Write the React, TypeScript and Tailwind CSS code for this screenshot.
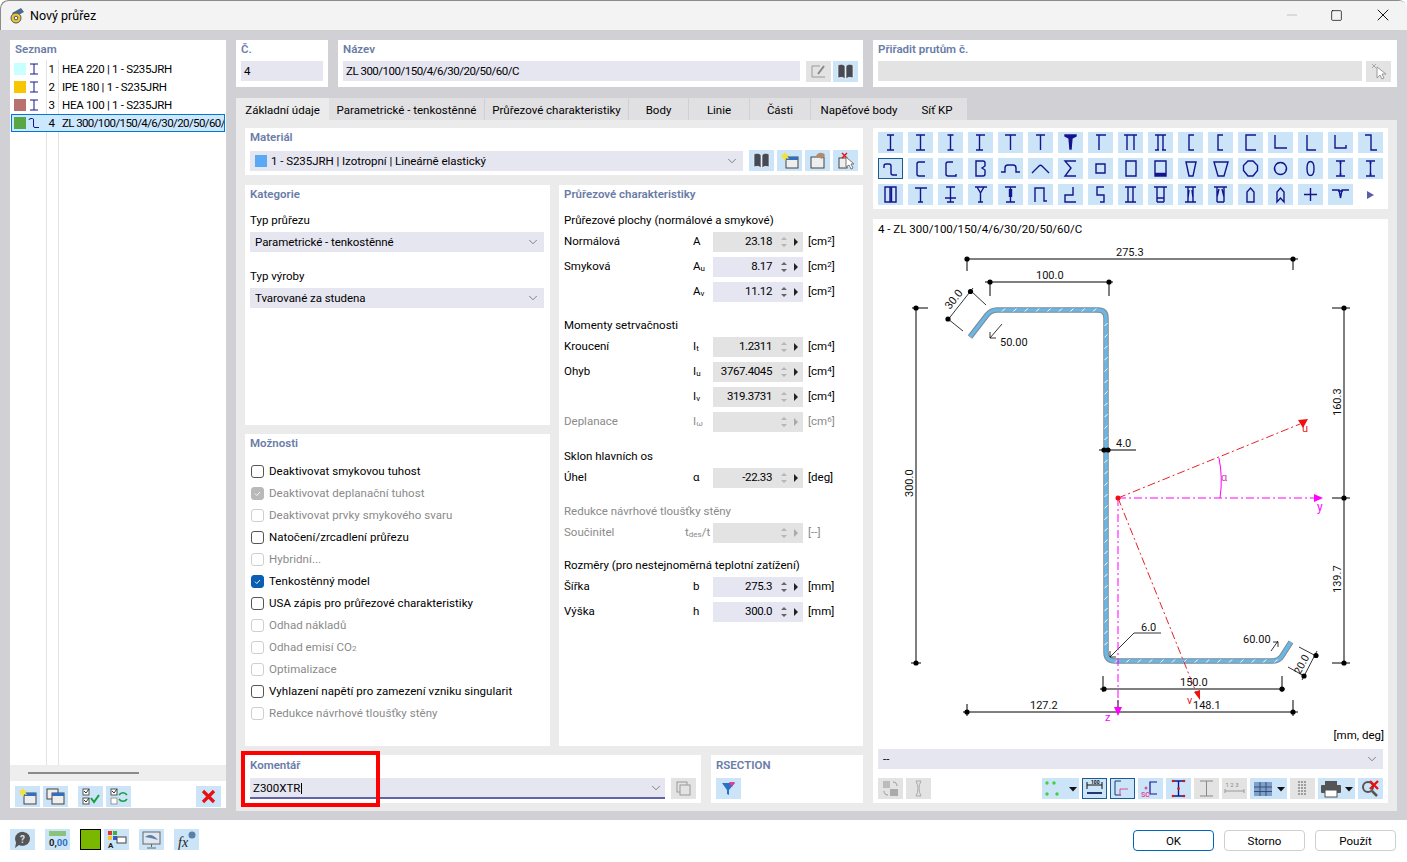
import type { ReactNode } from "react";
import { ChevronDown, Minus, Square, X } from "lucide-react";

const NAVY = "#14148c";

// section shape icons, 25x21 viewBox, row by row
const shapes: string[] = [
  "M9 3h7M12.5 3v15M9 18h7",
  "M8 3h9M12.5 3v15M8 18h9",
  "M9.5 3h6M12.5 3v15M9.5 18h6",
  "M8 3h9M11.5 3v15M8 18h7",
  "M7 3h11M12.5 3v15",
  "M8 3h9M12.5 3v15",
  "M7 3h11v1l-4 2-1 11h-1l-1-11-4-2z",
  "M8 3h10M11 3v15",
  "M6 3h13M9 3v15M16 3v15",
  "M7 3h11M7 18h4M14 18h4M10 3v15M15 3v15",
  "M16 3h-5v15h5",
  "M15 3h-5v15h5",
  "M18 3H8v15h10",
  "M7 3v13h12",
  "M9 3v15h9",
  "M7 3v13h11v-3",
  "M7 3h6v15h6",
  "M6 10V8q0-2 2-2h3q2 0 2 2v7q0 2 2 2h4",
  "M17 4h-6q-2 0-2 2v10q0 2 2 2h6",
  "M15 4h-5q-2 0-2 2v10q0 2 2 2h8v-2",
  "M8 3h7q2 0 2 2v3l-3 2 3 2v4q0 2-2 2H8z",
  "M3 14h4v-4q0-3 3-3h5q3 0 3 3v4h4",
  "M4 15l7-7q1.500-1.500 3 0l7 7",
  "M18 3H7l6 7-6 8h11",
  "M8 6h9v9H8z",
  "M8 3h10v15H8z",
  "M7 3h11v15H7zM7 15.500h11M7 17h11",
  "M8 4h10l-3 14h-4z",
  "M6 4h14l-4 14H10z",
  "M10 3h5l4.500 4.500v5L15 18h-5l-4.500-5.500v-5z",
  "M12.500 4.500a6 6 0 1 0 .01 0z",
  "M12.500 3.500c-2 0-3.500 3-3.500 7s1.500 7 3.500 7 3.500-3 3.500-7-1.500-7-3.500-7z",
  "M8 3h9M8 18h9M12.500 3v15M11.500 5h2M11.500 16h2",
  "M8 3h9M8 18h9M12.500 3v15M11.500 5h2M11.500 16h2",
  "M7 3h11v15H7zM12 3v15M13.500 3v15",
  "M7 4h12M12.500 4v14M10 18h5",
  "M8 3h9M12.500 3v15M7 14h11M9 18h7",
  "M7 3h12M9 3l3.500 6v9M16 3l-3.500 6M10 18h5",
  "M7 3h11M12.500 3v15M11.500 5v8M13.500 5v8M8 18h9",
  "M7 18V4h9v13h3",
  "M15 3v8H7v7h11",
  "M16 3H9v8h7v7h-4",
  "M7 3h11M7 18h11M10 3v15M15 3v15",
  "M6 3h13M9 3v15M16 3v15M9 14h7M9 18h7",
  "M7 3h11M7 18h11M10 3v15M15 3v15M11 6l-1 8M14 6l1 8",
  "M6 3h13M9 3v15M16 3v15M9 18h7M11 5l-2 8M14 5l2 8",
  "M9 18V8l3.500-4L16 8v10z",
  "M9 18V8l3.500-4L16 8v10l-3.500-4z",
  "M6 10.500h13M12.500 4v13",
  "M4 6h7l1.500 8M21 6h-7l-1.500 8M10 7h5",
];

const cls = "text-[11.5px] leading-none";

function Btn({ off, boxed, wide, children }: { off?: boolean; boxed?: boolean; wide?: boolean; children?: ReactNode }) {
  return (
    <div
      className={`${wide ? "w-[37px]" : "w-[25px]"} h-[21px] shrink-0 flex items-center justify-center ${off ? "bg-[#e3e3e3]" : "bg-[#cce4f7]"} ${boxed ? "border-[1.500px] border-[#1c5a94]" : ""}`}
    >
      {children}
    </div>
  );
}

function Ic({ children, w = 25 }: { children: ReactNode; w?: number }) {
  return (
    <svg width={w} height="21" viewBox={`0 0 ${w} 21`} fill="none">
      {children}
    </svg>
  );
}

function Drop() {
  return <path d="M27 9h8l-4 4.500z" fill="#111" />;
}

function Book({ off }: { off?: boolean }) {
  const c = off ? "#a8a8a8" : "#454a55";
  return (
    <Ic>
      <path d="M5 4c3-1 5-1 7 1v13c-2-2-4-2-7-1zM20 4c-3-1-5-1-7 1v13c2-2 4-2 7-1z" fill={c} stroke="#fff" strokeWidth=".6" />
    </Ic>
  );
}

function NewWin() {
  return (
    <Ic>
      <rect x="9" y="7" width="12" height="11" fill="#eee" stroke="#444" />
      <rect x="9" y="7" width="12" height="3" fill="#2f6fc4" />
      <path d="M8 2l1.200 2.500L12 4l-1.500 2.300L12 9l-2.800-.7L8 11 6.800 8.300 4 9l1.500-2.700L4 4l2.800.5z" fill="#f2e23c" />
    </Ic>
  );
}

function Heading({ children, className = "" }: { children: ReactNode; className?: string }) {
  return <div className={`text-[11.5px] font-semibold text-[#6a7ca8] pt-[2px] ${className}`}>{children}</div>;
}

function Select({ value, w, children }: { value?: string; w: string; children?: ReactNode }) {
  return (
    <div className={`${w} h-[20px] bg-[#e6e6f0] flex items-center pl-[5px] pr-[4px] ${cls} text-black`}>
      {children}
      <span className="flex-1 mt-[2px] tracking-[-0.05px]">{value}</span>
      <ChevronDown size={14} strokeWidth={1.2} className="text-[#555]" />
    </div>
  );
}

function Check({ label, state, off }: { label: ReactNode; state?: boolean; off?: boolean }) {
  return (
    <div className={`h-[22px] flex items-center gap-[5px] ${cls} ${off ? "text-[#8a8a8a]" : "text-black"}`}>
      <div
        className={`w-[13px] h-[13px] rounded-[3px] flex items-center justify-center border ${
          state ? (off ? "bg-[#b9b9b9] border-[#b9b9b9]" : "bg-[#0a5fb4] border-[#0a5fb4]") : off ? "border-[#cfcfcf]" : "border-[#555]"
        }`}
      >
        {state && (
          <svg width="9" height="9" viewBox="0 0 9 9" fill="none">
            <path d="M2 4.700l1.800 1.800L7 3" stroke="#fff" strokeWidth=".9" />
          </svg>
        )}
      </div>
      <span className="mt-[2px] tracking-[0.05px]">{label}</span>
    </div>
  );
}

function Row({ label, sym, sub, val, unit, edit, off }: { label?: string; sym: string; sub?: string; val?: string; unit: ReactNode; edit?: boolean; off?: boolean }) {
  return (
    <div className={`h-[25px] pt-[3px] flex items-start ${cls} ${off ? "text-[#8a8a8a]" : "text-black"}`}>
      <div className="w-[129px] h-[20px] flex items-center">{label}</div>
      <div className="w-[20px] h-[20px] flex items-center whitespace-nowrap justify-start">
        <span className={sym === "tdes" ? "-ml-[8px]" : ""}>{sym === "tdes" ? "t" : sym}</span>
        {sub && <span className="text-[8px] mt-[4px]">{sub}</span>}
        {sym === "tdes" && <span>/t</span>}
      </div>
      <div className={`w-[90px] h-[20px] flex items-center justify-end pr-[31px] tracking-[-0.4px] ${edit ? "bg-[#e6e6f3]" : "bg-[#e3e3e3]"} relative`}>
        {val}
        <svg width="8" height="12" viewBox="0 0 8 12" className="absolute right-[15px] top-[4px]">
          <path d="M4 1l3 3H1zM4 11L1 8h6z" fill={edit ? "#666" : "#b5b5b5"} />
        </svg>
        <svg width="6" height="8" viewBox="0 0 6 8" className="absolute right-[4px] top-[6px]">
          <path d="M1 0l4 4-4 4z" fill={off ? "#aaa" : "#222"} />
        </svg>
      </div>
      <div className="ml-[5px] h-[19px] flex items-center">{unit}</div>
    </div>
  );
}

const sup = (u: string, n: string) => (
  <span>
    [{u}
    <span className="text-[8px] relative -top-[3px]">{n}</span>]
  </span>
);

function SubHead({ children, off, mt }: { children: ReactNode; off?: boolean; mt: string }) {
  return <div className={`h-[17px] flex items-center ${cls} ${mt} ${off ? "text-[#8a8a8a]" : "text-black"}`}>{children}</div>;
}

function Dot({ x, y }: { x: number; y: number }) {
  return <circle cx={x} cy={y} r="2.600" fill="#000" />;
}

function Drawing() {
  const ticks: string[] = [];
  for (let x = 1002; x < 1100; x += 11.4) ticks.push(`M${x} 311.500l3-3`);
  for (let y = 326; y < 652; y += 11.4) ticks.push(`M1104.500 ${y}l3-3`);
  for (let x = 1115; x < 1276; x += 11.4) ticks.push(`M${x} 662.500l3-3`);
  const profile = "M970 337L987 315Q991 310 997 310H1098Q1106 310 1106 318V652Q1106 661 1115 661H1272Q1279 661 1282 656L1291 642";
  const t = { fontSize: 11, fontFamily: "Roboto, sans-serif", fill: "#111" };
  return (
    <svg width="515" height="488" viewBox="873 240 515 488" className="block">
      <path d={profile} fill="none" stroke="#7f8890" strokeWidth="5.500" />
      <path d={profile} fill="none" stroke="#6cb6e4" strokeWidth="3.600" />
      <path d={ticks.join("")} stroke="#fff" strokeWidth="1" />
      <g stroke="#000" strokeWidth="1" fill="none">
        <path d="M967 259H1298M967 259v12M1293 259v11M985 282H1113M990 282v14M1109 282v14" />
        <path d="M912 308H928M916 308V663M911 663H921M1332 308H1350M1344 308V663M1332 498H1350M1332 663H1350" />
        <path d="M973 288L947 321M971 291L986 305M948 319L963 331M1002 324L990 338M990 332V338H996" strokeWidth=".8" />
        <path d="M1099 450H1136" />
        <path d="M1110 657L1134 633H1161M1110 651V657H1116" strokeWidth=".8" />
        <path d="M1271 651L1278 641M1273 642H1278V647" strokeWidth=".8" />
        <path d="M1299 647L1318 657M1288 667L1306 677M1317 651L1302 680" strokeWidth=".8" />
        <path d="M1100 689H1285M1103 676V692M1282 676V692M963 712H1298M967 704V716M1293 700V716" />
        <path d="M1118 700V712" />
      </g>
      <g fill="#000">
        <Dot x={967} y={259} />
        <Dot x={1293} y={259} />
        <Dot x={990} y={282} />
        <Dot x={1109} y={282} />
        <Dot x={970.500} y={291.500} />
        <Dot x={948} y={319} />
        <Dot x={916} y={308} />
        <Dot x={916} y={663} />
        <Dot x={1344} y={308} />
        <Dot x={1344} y={498} />
        <Dot x={1344} y={663} />
        <Dot x={1104} y={450} />
        <Dot x={1108} y={450} />
        <Dot x={1104} y={689} />
        <Dot x={1282} y={689} />
        <Dot x={967} y={712} />
        <Dot x={1293} y={712} />
        <Dot x={1316} y={655.500} />
        <Dot x={1304} y={676} />
      </g>
      <path d="M1118 498H1316M1118 498V708" fill="none" stroke="#ff00ff" strokeWidth="1" strokeDasharray="8 3 2 3" />
      <path d="M1219 458Q1223 478 1220 498" fill="none" stroke="#ff00ff" strokeWidth="1" />
      <path d="M1314 494l9 4-9 4zM1114 707h8l-4 9z" fill="#ff00ff" />
      <path d="M1118 498L1300 424M1118 498L1196 692" fill="none" stroke="#e8202a" strokeWidth="1" strokeDasharray="8 3 2 3" />
      <path d="M1298 420l10-1-5 9zM1194 692l6-2 0 10z" fill="#f01010" />
      <circle cx="1118" cy="498" r="2.500" fill="#f01010" />
      <text x="1116" y="256" {...t}>275.3</text>
      <text x="1036" y="279" {...t}>100.0</text>
      <text x="1000" y="346" {...t}>50.00</text>
      <text x="1116" y="447" {...t}>4.0</text>
      <text x="1141" y="631" {...t}>6.0</text>
      <text x="1243" y="643" {...t}>60.00</text>
      <text x="1180" y="686" {...t}>150.0</text>
      <text x="1030" y="709" {...t}>127.2</text>
      <text x="1193" y="709" {...t}>148.1</text>
      <text transform="translate(913 497) rotate(-90)" {...t}>300.0</text>
      <text transform="translate(1341 416) rotate(-90)" {...t}>160.3</text>
      <text transform="translate(1341 593) rotate(-90)" {...t}>139.7</text>
      <text transform="translate(950 310) rotate(-52)" {...t}>30.0</text>
      <text transform="translate(1300 675) rotate(-62)" {...t} fontSize="10.500">20.0</text>
      <text x="1317" y="511" fontSize="12" fontFamily="Roboto, sans-serif" fill="#ff00ff">y</text>
      <text x="1105" y="721" fontSize="11" fontFamily="Roboto, sans-serif" fill="#ff00ff">z</text>
      <text x="1302" y="432" fontSize="11" fontFamily="Roboto, sans-serif" fill="#e8202a">u</text>
      <text x="1187" y="704" fontSize="11" fontFamily="Roboto, sans-serif" fill="#e8202a">v</text>
      <text x="1221" y="481" fontSize="11" fontFamily="Roboto, sans-serif" fill="#e040c0">α</text>
    </svg>
  );
}

const sections = [
  { color: "bg-[#c8ffff]", n: 1, name: "HEA 220 | 1 - S235JRH" },
  { color: "bg-[#f7c600]", n: 2, name: "IPE 180 | 1 - S235JRH" },
  { color: "bg-[#b97070]", n: 3, name: "HEA 100 | 1 - S235JRH" },
  { color: "bg-[#57a845]", n: 4, name: "ZL 300/100/150/4/6/30/20/50/60/C" },
];

const tabs = [
  { name: "Základní údaje", w: "w-[93px]", active: true },
  { name: "Parametrické - tenkostěnné", w: "w-[156px]" },
  { name: "Průřezové charakteristiky", w: "w-[144px]" },
  { name: "Body", w: "w-[60px]" },
  { name: "Linie", w: "w-[61px]" },
  { name: "Části", w: "w-[61px]" },
  { name: "Napěťové body", w: "w-[96px]", plain: true },
  { name: "Síť KP", w: "w-[60px]", plain: true },
];

export default function App() {
  return (
    <div className="w-[1407px] h-[862px] flex flex-col overflow-hidden bg-white rounded-t-[8px] font-['Roboto','Noto_Sans',sans-serif] text-black">
      {/* title bar */}
      <div className="h-[30px] shrink-0 bg-[#f3f3f3] flex items-center pl-[9px] rounded-t-[8px] shadow-[inset_1px_1px_0_#8c8c8c]">
        <svg width="17" height="17" viewBox="0 0 17 17">
          <path d="M3 6l9-5 3 4-9 5z" fill="#4a6a90" />
          <circle cx="7" cy="11" r="5" fill="#e8c53a" stroke="#555" />
          <circle cx="7" cy="11" r="1.800" fill="#fff" stroke="#555" />
        </svg>
        <span className="ml-[4px] mt-[2px] text-[12.5px]">Nový průřez</span>
        <div className="ml-auto flex items-center">
          <Minus size={16} strokeWidth={1} className="mr-[30px] text-[#aaa]" />
          <Square size={13} strokeWidth={1.3} className="mr-[30px]" />
          <X size={20} strokeWidth={1.1} className="mr-[14px]" />
        </div>
      </div>

      {/* body */}
      <div className="h-[790px] shrink-0 bg-[#d0d0d5] flex items-start gap-[10px] pl-[10px] pt-[10px]">
        {/* list */}
        <div className="w-[216px] h-[768px] bg-white flex flex-col relative">
          <Heading className="h-[18px] mb-[2px] pl-[5px] flex items-center">Seznam</Heading>
          <div className="flex-1 relative">
            <div className="absolute left-[36px] top-0 bottom-0 w-px bg-[#e3e3e3]" />
            <div className="absolute left-[48px] top-0 bottom-0 w-px bg-[#e3e3e3]" />
            {sections.map((s) => (
              <div key={s.n} className={`h-[18px] flex items-center relative ${cls} ${s.n === 4 ? "bg-[#cce8ff] outline outline-1 -outline-offset-1 outline-[#0078d4] ml-[1px] w-[214px]" : ""}`}>
                <div className={`w-[12px] h-[12px] shrink-0 ${s.color} ${s.n === 4 ? "ml-[3px]" : "ml-[4px]"}`} />
                <svg width="12" height="12" viewBox="0 0 12 12" className="ml-[2px] shrink-0" fill="none" stroke={NAVY} strokeWidth="1">
                  <path d={s.n === 4 ? "M1 3q0-1.500 2-1.500h1.500q1 0 1 1.500v6q0 1.500 1.500 1.500h4" : "M2 1h8M6 1v10M2 11h8"} />
                </svg>
                <span className="w-[15px] text-right shrink-0 mt-[2px]">{s.n}</span>
                <span className={`ml-[7px] mt-[2px] whitespace-nowrap ${s.n === 4 ? "overflow-hidden w-[163px] tracking-[-0.6px]" : "tracking-[-0.3px]"}`}>{s.name}</span>
              </div>
            ))}
          </div>
          <div className="h-[16px] bg-[#eeeeee] flex items-center pl-[18px]">
            <div className="w-[111px] h-[2px] bg-[#8a8a8a]" />
          </div>
          <div className="h-[27px] flex items-start pt-[5px] pl-[5px] pr-[5px]">
            <Btn><NewWin /></Btn>
            <div className="w-[3px]" />
            <Btn>
              <Ic>
                <rect x="4" y="3" width="11" height="10" fill="#eee" stroke="#444" />
                <rect x="9" y="7" width="12" height="11" fill="#eee" stroke="#444" />
                <rect x="9" y="7" width="12" height="3" fill="#2f6fc4" />
              </Ic>
            </Btn>
            <div className="w-[10px]" />
            <Btn>
              <Ic>
                <rect x="5" y="3" width="6" height="6" fill="#fff" stroke="#555" />
                <rect x="5" y="12" width="6" height="6" fill="#fff" stroke="#555" />
                <path d="M6 5l2 2 3-4M6 14l2 2 3-4" stroke="#333" />
                <path d="M13 12l3 4 5-7" stroke="#17a03c" strokeWidth="2" />
              </Ic>
            </Btn>
            <div className="w-[3px]" />
            <Btn>
              <Ic>
                <rect x="5" y="3" width="6" height="6" fill="#fff" stroke="#555" />
                <rect x="5" y="12" width="6" height="6" fill="#fff" stroke="#999" />
                <path d="M6 5l2 2 3-4" stroke="#333" />
                <path d="M13 9c2-3 6-3 8 0M21 13c-2 3-6 3-8 0" stroke="#17a03c" strokeWidth="1.600" />
              </Ic>
            </Btn>
            <div className="ml-auto">
              <Btn>
                <Ic>
                  <path d="M7 5l11 11M18 5L7 16" stroke="#e81010" strokeWidth="3.200" />
                </Ic>
              </Btn>
            </div>
          </div>
        </div>

        {/* main */}
        <div className="w-[1161px] flex flex-col">
          <div className="h-[47px] flex gap-[10px]">
            <div className="w-[92px] bg-white px-[5px]">
              <Heading className="h-[18px] mb-[1px] flex items-center">Č.</Heading>
              <div className={`mt-[3px] h-[20px] w-[82px] bg-[#e6e6f0] flex items-center pl-[3px] pt-[2px] ${cls}`}>4</div>
            </div>
            <div className="w-[525px] bg-white px-[5px]">
              <Heading className="h-[18px] mb-[1px] flex items-center">Název</Heading>
              <div className="mt-[3px] flex gap-[2px]">
                <div className={`w-[457px] h-[20px] bg-[#e6e6f0] flex items-center pl-[3px] pt-[2px] mr-[4px] tracking-[-0.5px] ${cls}`}>ZL 300/100/150/4/6/30/20/50/60/C</div>
                <Btn off>
                  <Ic>
                    <path d="M6 5h8M6 5v11M6 16h13" stroke="#9a9a9a" />
                    <path d="M12 13l6-8" stroke="#888" strokeWidth="2" />
                  </Ic>
                </Btn>
                <Btn><Book /></Btn>
              </div>
            </div>
            <div className="w-[524px] bg-white px-[5px]">
              <Heading className="h-[18px] mb-[1px] flex items-center">Přiřadit prutům č.</Heading>
              <div className="mt-[3px] flex gap-[4px]">
                <div className="w-[484px] h-[20px] bg-[#e3e3e3]" />
                <Btn off>
                  <Ic>
                    <path d="M6 3l4 4M10 3L6 7" stroke="#aaa" />
                    <path d="M11 6v11l3-3 2 4 2-1-2-4h4z" fill="#fff" stroke="#999" />
                  </Ic>
                </Btn>
              </div>
            </div>
          </div>

          {/* tabs */}
          <div className="h-[22px] mt-[11px] flex">
            {tabs.map((t) => (
              <div key={t.name} className={`${t.w} flex items-center justify-center pt-[3px] ${cls} ${t.active ? "bg-[#ebebeb]" : t.plain ? "bg-[#e0e0e3]" : "bg-[#e0e0e3] border-r border-[#d0d0d5]"}`}>
                {t.name}
              </div>
            ))}
          </div>

          {/* tab panel */}
          <div className="h-[691px] bg-[#ebebeb] flex gap-[10px] px-[9px] pt-[8px]">
            <div className="w-[618px] flex flex-col">
              {/* material */}
              <div className="h-[47px] bg-white px-[5px]">
                <Heading className="h-[18px] flex items-center">Materiál</Heading>
                <div className="mt-[4px] flex items-center">
                  <Select w="w-[494px]" value="1 - S235JRH | Izotropní | Lineárně elastický">
                    <div className="w-[12px] h-[12px] bg-[#5aa9f5] mr-[4px]" />
                  </Select>
                  <div className="ml-[6px] flex gap-[3px]">
                    <Btn><Book /></Btn>
                    <Btn><NewWin /></Btn>
                    <Btn>
                      <Ic>
                        <rect x="6" y="7" width="13" height="11" fill="#eee" stroke="#444" />
                        <path d="M11 6c2-4 7-4 9-1l-3 4z" fill="#b08a6a" />
                      </Ic>
                    </Btn>
                    <Btn>
                      <Ic>
                        <rect x="6" y="8" width="8" height="10" fill="#eee" stroke="#444" />
                        <path d="M9 3l5 5M14 3L9 8" stroke="#e81010" strokeWidth="1.400" />
                        <path d="M13 7v10l3-2 2 4 2-1-2-4h3z" fill="#fff" stroke="#777" />
                      </Ic>
                    </Btn>
                  </div>
                </div>
              </div>

              <div className="mt-[10px] h-[561px] flex gap-[9px]">
                <div className="w-[305px] flex flex-col gap-[9px]">
                  <div className="h-[240px] bg-white px-[5px]">
                    <Heading className="h-[18px] flex items-center">Kategorie</Heading>
                    <div className={`mt-[10px] h-[16px] flex items-center ${cls}`}>Typ průřezu</div>
                    <div className="mt-[3px]"><Select w="w-[294px]" value="Parametrické - tenkostěnné" /></div>
                    <div className={`mt-[17px] h-[16px] flex items-center ${cls}`}>Typ výroby</div>
                    <div className="mt-[3px]"><Select w="w-[294px]" value="Tvarované za studena" /></div>
                  </div>
                  <div className="h-[312px] bg-white px-[5px]">
                    <Heading className="h-[18px] flex items-center mb-[8px]">Možnosti</Heading>
                    <div className="pl-[1px]">
                      <Check label="Deaktivovat smykovou tuhost" />
                      <Check label="Deaktivovat deplanační tuhost" state off />
                      <Check label="Deaktivovat prvky smykového svaru" off />
                      <Check label="Natočení/zrcadlení průřezu" />
                      <Check label="Hybridní..." off />
                      <Check label="Tenkostěnný model" state />
                      <Check label="USA zápis pro průřezové charakteristiky" />
                      <Check label="Odhad nákladů" off />
                      <Check label={<>Odhad emisí CO<span className="text-[8px]">2</span></>} off />
                      <Check label="Optimalizace" off />
                      <Check label="Vyhlazení napětí pro zamezení vzniku singularit" />
                      <Check label="Redukce návrhové tloušťky stěny" off />
                    </div>
                  </div>
                </div>

                <div className="w-[304px] bg-white px-[5px]">
                  <Heading className="h-[18px] flex items-center">Průřezové charakteristiky</Heading>
                  <SubHead mt="mt-[9px]">Průřezové plochy (normálové a smykové)</SubHead>
                  <Row label="Normálová" sym="A" val="23.18" unit={sup("cm", "2")} />
                  <Row label="Smyková" sym="A" sub="u" val="8.17" unit={sup("cm", "2")} edit />
                  <Row sym="A" sub="v" val="11.12" unit={sup("cm", "2")} edit />
                  <SubHead mt="mt-[13px]">Momenty setrvačnosti</SubHead>
                  <Row label="Kroucení" sym="I" sub="t" val="1.2311" unit={sup("cm", "4")} />
                  <Row label="Ohyb" sym="I" sub="u" val="3767.4045" unit={sup("cm", "4")} />
                  <Row sym="I" sub="v" val="319.3731" unit={sup("cm", "4")} />
                  <Row label="Deplanace" sym="I" sub="ω" unit={sup("cm", "6")} off />
                  <SubHead mt="mt-[14px]">Sklon hlavních os</SubHead>
                  <Row label="Úhel" sym="α" val="-22.33" unit="[deg]" />
                  <SubHead mt="mt-[13px]" off>Redukce návrhové tloušťky stěny</SubHead>
                  <Row label="Součinitel" sym="tdes" sub="des" unit="[--]" off />
                  <SubHead mt="mt-[12px]">Rozměry (pro nestejnoměrná teplotní zatížení)</SubHead>
                  <Row label="Šířka" sym="b" val="275.3" unit="[mm]" edit />
                  <Row label="Výška" sym="h" val="300.0" unit="[mm]" edit />
                </div>
              </div>

              <div className="mt-[9px] h-[48px] flex gap-[10px]">
                <div className="w-[456px] bg-white px-[5px] relative">
                  <Heading className="h-[19px] flex items-center">Komentář</Heading>
                  <div className="mt-[4px] flex items-start">
                    <div className={`w-[415px] h-[21px] bg-[#e6e6f0] border-b-2 border-[#6264a7] flex items-center pl-[3px] pr-[2px] ${cls}`}>
                      <span className="border-r border-black pr-px mt-[2px]">Z300XTR</span>
                      <ChevronDown size={14} strokeWidth={1.2} className="ml-auto text-[#555]" />
                    </div>
                    <div className="ml-[6px]">
                      <Btn off>
                        <Ic>
                          <rect x="6" y="4" width="10" height="10" fill="#e3e3e3" stroke="#999" />
                          <rect x="9" y="7" width="10" height="10" fill="#e3e3e3" stroke="#999" />
                        </Ic>
                      </Btn>
                    </div>
                  </div>
                  {/* red highlight over the comment field */}
                  <div className="absolute -left-[4px] -top-[4px] w-[139px] h-[56px] border-[4px] border-[#ff0000]" />
                </div>
                <div className="w-[152px] bg-white px-[5px]">
                  <Heading className="h-[19px] flex items-center">RSECTION</Heading>
                  <div className="mt-[4px]">
                    <Btn>
                      <Ic>
                        <path d="M6 5h13l-6 7v5l-2-1v-4z" fill="#2f6fc4" />
                        <path d="M13 4l6 0-3 5z" fill="#e0408a" />
                      </Ic>
                    </Btn>
                  </div>
                </div>
              </div>
            </div>

            {/* right column */}
            <div className="w-[515px] flex flex-col">
              <div className="h-[81px] bg-white px-[5px] pt-[4px]">
                <div className="grid grid-cols-[repeat(17,25px)] justify-between gap-y-[5px]">
                  {shapes.map((d, i) => (
                    <Btn key={i} boxed={i === 17}>
                      <svg width="25" height="21" viewBox="0 0 25 21" fill={i === 6 ? NAVY : "none"} className="shrink-0">
                        <path d={d} stroke={NAVY} strokeWidth="1.400" />
                      </svg>
                    </Btn>
                  ))}
                  <div className="w-[25px] h-[21px] flex items-center justify-center">
                    <svg width="9" height="10" viewBox="0 0 9 10">
                      <path d="M1 1l7 4-7 4z" fill="#5b5ea6" />
                    </svg>
                  </div>
                </div>
              </div>

              <div className="mt-[10px] h-[584px] bg-white">
                <div className={`h-[21px] flex items-center pl-[5px] ${cls}`}>4 - ZL 300/100/150/4/6/30/20/50/60/C</div>
                <Drawing />
                <div className={`h-[16px] flex items-center justify-end pr-[4px] ${cls}`}>[mm, deg]</div>
                <div className="mt-[5px] ml-[5px]">
                  <Select w="w-[505px]" value="--" />
                </div>
                <div className="mt-[9px] mx-[5px] flex gap-[3px]">
                  <Btn off>
                    <Ic>
                      <rect x="5" y="3" width="7" height="7" fill="#bbb" />
                      <rect x="12" y="11" width="8" height="7" fill="#aaa" />
                      <path d="M15 4c3 0 4 2 4 4M10 17c-3 0-4-2-4-4" stroke="#999" />
                    </Ic>
                  </Btn>
                  <Btn off>
                    <Ic>
                      <path d="M10 3q4 7.500 0 15M15 3q-4 7.500 0 15M10 3h5M10 18h5" stroke="#aaa" />
                    </Ic>
                  </Btn>
                  <div className="w-[105px]" />
                  <Btn wide>
                    <Ic w={37}>
                      <g fill="#3fd13f">
                        <circle cx="5" cy="5" r="1.700" />
                        <circle cx="12" cy="5" r="1.700" />
                        <circle cx="5" cy="16" r="1.700" />
                        <circle cx="15" cy="16" r="1.700" />
                      </g>
                      <Drop />
                    </Ic>
                  </Btn>
                  <Btn boxed>
                    <svg width="21" height="17" viewBox="0 0 21 17" fill="none">
                      <path d="M3 5h15M3 2v7M18 2v7" stroke="#111" />
                      <path d="M3 13h15" stroke="#1c3a70" strokeWidth="2" />
                      <text x="7" y="4" fontSize="5" fontWeight="700" fill="#111">100</text>
                    </svg>
                  </Btn>
                  <Btn boxed>
                    <svg width="21" height="17" viewBox="0 0 21 17" fill="none">
                      <path d="M9 1H3v14h6" stroke="#1c3a70" />
                      <path d="M8 9h8M8 9v7" stroke="#d050a0" />
                    </svg>
                  </Btn>
                  <Btn>
                    <Ic>
                      <path d="M19 4h-7v12h7" stroke={NAVY} strokeWidth="1.200" />
                      <circle cx="8" cy="10" r="1.500" fill="#e0509a" />
                      <text x="3" y="19" fontSize="7" fill="#e0509a" fontWeight="700">SC</text>
                    </Ic>
                  </Btn>
                  <Btn>
                    <Ic>
                      <path d="M7 3h11M12.500 3v15M7 18h11" stroke={NAVY} strokeWidth="1.400" />
                      <g fill="#e81010">
                        <circle cx="7" cy="3" r="1.300" />
                        <circle cx="18" cy="3" r="1.300" />
                        <circle cx="7" cy="18" r="1.300" />
                        <circle cx="18" cy="18" r="1.300" />
                        <circle cx="12.500" cy="10.500" r="1.300" />
                      </g>
                    </Ic>
                  </Btn>
                  <Btn off>
                    <Ic>
                      <path d="M6 3h13M12.500 3v15M6 18h13" stroke="#888" />
                    </Ic>
                  </Btn>
                  <Btn off>
                    <Ic>
                      <text x="3.500" y="9" fontSize="6" fill="#888">1 2 3</text>
                      <path d="M3 13h19M3 11v4M22 11v4" stroke="#999" />
                    </Ic>
                  </Btn>
                  <Btn wide>
                    <Ic w={37}>
                      <rect x="4" y="4" width="18" height="14" fill="#7f9fc8" />
                      <path d="M10 4v14M16 4v14M4 9h18M4 13.500h18" stroke="#34507a" />
                      <Drop />
                    </Ic>
                  </Btn>
                  <Btn off>
                    <Ic>
                      <path d="M8 4h9M8 7h9M8 10h9M8 13h9M8 16h9" stroke="#888" strokeDasharray="2 1" strokeWidth="1.500" />
                    </Ic>
                  </Btn>
                  <Btn wide>
                    <Ic w={37}>
                      <rect x="7" y="3" width="12" height="5" fill="#555" />
                      <rect x="3" y="7" width="20" height="8" rx="1" fill="#555" />
                      <rect x="7" y="12" width="12" height="7" fill="#fff" stroke="#555" />
                      <Drop />
                    </Ic>
                  </Btn>
                  <Btn>
                    <Ic>
                      <circle cx="10" cy="9" r="5" stroke="#555" strokeWidth="2" />
                      <path d="M14 13l5 5" stroke="#555" strokeWidth="2.500" />
                      <path d="M12 3l8 8M20 3l-8 8" stroke="#e81010" strokeWidth="2.400" />
                    </Ic>
                  </Btn>
                </div>
              </div>
            </div>
          </div>
        </div>
      </div>

      {/* bottom bar */}
      <div className="flex-1 flex items-start pt-[9px] pl-[10px]">
        <Btn>
          <Ic>
            <path d="M5 10a7.500 7 0 1 1 4 6l-4 3 1-5z" fill="#555" />
            <text x="10" y="14" fontSize="10" fontWeight="700" fill="#cce4f7">?</text>
          </Ic>
        </Btn>
        <div className="w-[10px]" />
        <Btn>
          <Ic>
            <rect x="4" y="2" width="17" height="5" fill="#8ac47c" />
            <text x="4" y="17" fontSize="9.500" fontWeight="700" fill="#222">0,<tspan fill="#2f6fc4">00</tspan></text>
          </Ic>
        </Btn>
        <div className="w-[10px]" />
        <div className="w-[21px] h-[21px] bg-[#7ab800] border-[1.500px] border-black shrink-0" />
        <div className="w-[3px]" />
        <Btn>
          <Ic>
            <rect x="4" y="2" width="4" height="4" fill="#e83030" />
            <rect x="9" y="2" width="4" height="4" fill="#3cb43c" />
            <rect x="4" y="7" width="4" height="4" fill="#f2c52c" />
            <rect x="9" y="7" width="4" height="4" fill="#3060d0" />
            <rect x="13" y="8" width="9" height="6" fill="#fff" stroke="#444" />
            <text x="4" y="19" fontSize="8" fontWeight="700" fill="#222">A</text>
          </Ic>
        </Btn>
        <div className="w-[10px]" />
        <Btn>
          <Ic>
            <rect x="4" y="3" width="17" height="12" fill="#dfe8f0" stroke="#666" />
            <path d="M6 8q6-5 13 3-6-2-13-3z" fill="#5a7fa8" />
            <path d="M12.500 15v3M8 19h9" stroke="#666" />
          </Ic>
        </Btn>
        <div className="w-[10px]" />
        <Btn>
          <Ic>
            <text x="4" y="18" fontSize="14" fontStyle="italic" fontFamily="Liberation Serif, serif" fill="#222">fx</text>
            <circle cx="18" cy="6" r="3.500" fill="#5a7fa8" />
          </Ic>
        </Btn>
        <div className="ml-auto flex gap-[10px] pr-[11px] pt-[1px]">
          <div className={`w-[81px] h-[21px] rounded-[4px] border border-[#0067c0] flex items-center justify-center pt-[2px] ${cls}`}>OK</div>
          <div className={`w-[81px] h-[21px] rounded-[4px] border border-[#cfcfcf] flex items-center justify-center pt-[2px] ${cls}`}>Storno</div>
          <div className={`w-[81px] h-[21px] rounded-[4px] border border-[#cfcfcf] flex items-center justify-center pt-[2px] ${cls}`}>Použít</div>
        </div>
      </div>
    </div>
  );
}
